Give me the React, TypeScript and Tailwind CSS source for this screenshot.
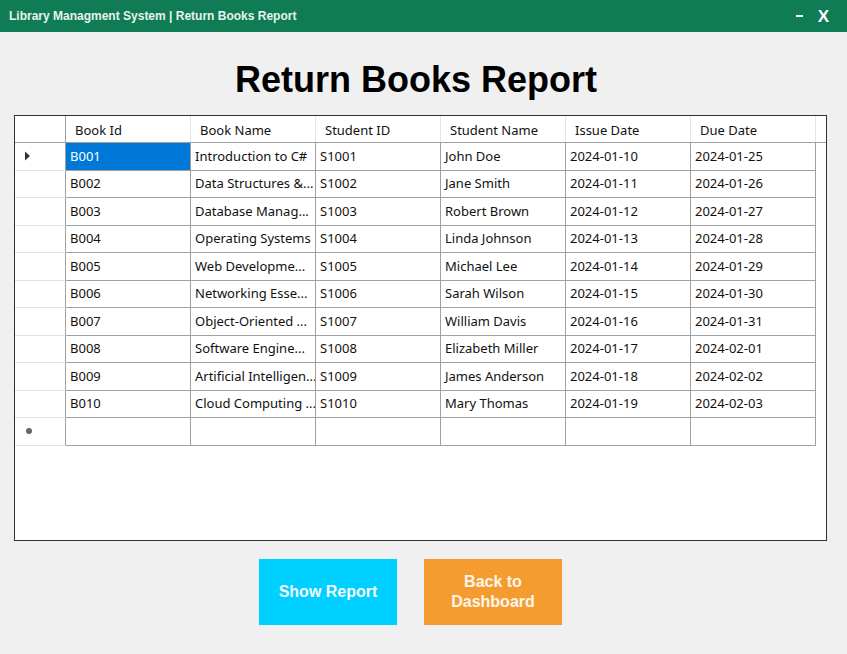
import React from 'react';

type Row = {
  id: string;
  name: string;
  studentId: string;
  student: string;
  issue: string;
  due: string;
};

const rows: Row[] = [
  { id: 'B001', name: 'Introduction to C#', studentId: 'S1001', student: 'John Doe', issue: '2024-01-10', due: '2024-01-25' },
  { id: 'B002', name: 'Data Structures &...', studentId: 'S1002', student: 'Jane Smith', issue: '2024-01-11', due: '2024-01-26' },
  { id: 'B003', name: 'Database Manag...', studentId: 'S1003', student: 'Robert Brown', issue: '2024-01-12', due: '2024-01-27' },
  { id: 'B004', name: 'Operating Systems', studentId: 'S1004', student: 'Linda Johnson', issue: '2024-01-13', due: '2024-01-28' },
  { id: 'B005', name: 'Web Developme...', studentId: 'S1005', student: 'Michael Lee', issue: '2024-01-14', due: '2024-01-29' },
  { id: 'B006', name: 'Networking Esse...', studentId: 'S1006', student: 'Sarah Wilson', issue: '2024-01-15', due: '2024-01-30' },
  { id: 'B007', name: 'Object-Oriented ...', studentId: 'S1007', student: 'William Davis', issue: '2024-01-16', due: '2024-01-31' },
  { id: 'B008', name: 'Software Engine...', studentId: 'S1008', student: 'Elizabeth Miller', issue: '2024-01-17', due: '2024-02-01' },
  { id: 'B009', name: 'Artificial Intelligen...', studentId: 'S1009', student: 'James Anderson', issue: '2024-01-18', due: '2024-02-02' },
  { id: 'B010', name: 'Cloud Computing ...', studentId: 'S1010', student: 'Mary Thomas', issue: '2024-01-19', due: '2024-02-03' },
];

const headers = ['Book Id', 'Book Name', 'Student ID', 'Student Name', 'Issue Date', 'Due Date'];

function Cell({ text, selected }: { text: string; selected?: boolean }) {
  return (
    <div
      className={`w-[125px] shrink-0 h-full border-r border-[#a0a0a0] pl-1 flex items-center whitespace-nowrap overflow-hidden ${
        selected ? 'bg-[#0078d7] text-white' : 'bg-white text-[#111]'
      }`}
    >
      {text}
    </div>
  );
}

function GridRow({ row, current }: { row: Row; current?: boolean }) {
  const cells = [row.id, row.name, row.studentId, row.student, row.issue, row.due];
  return (
    <div className="flex h-[27.5px]">
      <div className="w-[51px] shrink-0 border-r border-[#a0a0a0] border-b border-b-[#e3e3e3] bg-white flex items-center pl-[9px]">
        {current && (
          <svg width="7" height="10" viewBox="0 0 7 10">
            <path d="M1 0.5 L6 5 L1 9.5 Z" fill="#333" />
          </svg>
        )}
      </div>
      <div className="flex border-b border-[#a0a0a0]">
        {cells.map((c, i) => (
          <Cell key={i} text={c} selected={current && i === 0} />
        ))}
      </div>
    </div>
  );
}

function ReportGrid() {
  return (
    <div className="ml-[14px] w-[813px] h-[426px] border border-[#333] bg-white text-[13px] font-['Noto_Sans','Open_Sans',sans-serif] overflow-hidden">
      <div className="flex h-[27px] border-b border-[#a0a0a0]">
        <div className="w-[51px] shrink-0 border-r border-[#a0a0a0]" />
        {headers.map((h) => (
          <div
            key={h}
            className="w-[125px] shrink-0 border-r border-[#e5e5e5] pl-[9px] pt-[3px] flex items-center text-[#111]"
          >
            {h}
          </div>
        ))}
      </div>
      {rows.map((r, i) => (
        <GridRow key={r.id} row={r} current={i === 0} />
      ))}
      <div className="flex h-[27.5px]">
        <div className="w-[51px] shrink-0 border-r border-[#a0a0a0] border-b border-b-[#e3e3e3] flex items-center pl-[11px]">
          <span className="inline-block w-[6px] h-[6px] rounded-full bg-[#666]" />
        </div>
        <div className="flex border-b border-[#a0a0a0]">
          {headers.map((h) => (
            <Cell key={h} text="" />
          ))}
        </div>
      </div>
    </div>
  );
}

export default function App() {
  return (
    <div className="w-[847px] h-[654px] bg-[#f0f0f0] overflow-hidden font-['Liberation_Sans',Arial,sans-serif]">
      <div className="h-[32px] bg-[#0f7c55] flex items-center justify-between pl-[9px] pr-[18px]">
        <span className="text-[12px] font-bold text-[#e8f2ee]">
          Library Managment System | Return Books Report
        </span>
        <div className="flex items-center gap-[15px] text-white font-bold">
          <span className="inline-block w-[7px] h-[2px] bg-white" />
          <span className="text-[17px] leading-none">X</span>
        </div>
      </div>
      <h1 className="h-[83px] flex items-center justify-center text-[36px] font-bold text-black pt-[12px] pr-[15px]">
        Return Books Report
      </h1>
      <ReportGrid />
      <div className="flex gap-[27px] pl-[259px] mt-[18px]">
        <button className="w-[138px] h-[66px] bg-[#00d0ff] text-[#f4fbff] text-[16px] font-bold">
          Show Report
        </button>
        <button className="w-[138px] h-[66px] bg-[#f59c31] text-[#fff6ea] text-[16px] font-bold leading-[20px]">
          Back to
          <br />
          Dashboard
        </button>
      </div>
    </div>
  );
}
